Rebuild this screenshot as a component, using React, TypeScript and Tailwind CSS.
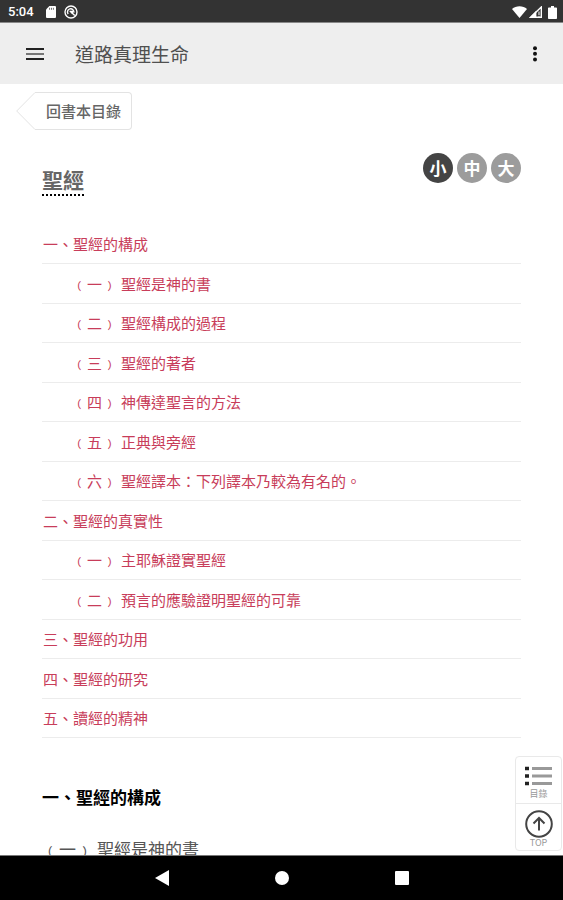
import React from "react";

type Entry = { label: string; mark?: string };

const entries: Entry[] = [
  { label: "一、聖經的構成" },
  { mark: "﹙一﹚", label: "聖經是神的書" },
  { mark: "﹙二﹚", label: "聖經構成的過程" },
  { mark: "﹙三﹚", label: "聖經的著者" },
  { mark: "﹙四﹚", label: "神傳達聖言的方法" },
  { mark: "﹙五﹚", label: "正典與旁經" },
  { mark: "﹙六﹚", label: "聖經譯本：下列譯本乃較為有名的。" },
  { label: "二、聖經的真實性" },
  { mark: "﹙一﹚", label: "主耶穌證實聖經" },
  { mark: "﹙二﹚", label: "預言的應驗證明聖經的可靠" },
  { label: "三、聖經的功用" },
  { label: "四、聖經的研究" },
  { label: "五、讀經的精神" },
];

function StatusBar() {
  return (
    <div className="flex h-[23px] shrink-0 items-center border-b border-[#888] bg-[#333] pt-0.5 pr-1.5 pl-2 text-white">
      <span className="font-[Roboto,sans-serif] text-[13px] leading-4 font-medium">5:04</span>
      <svg className="ml-3 h-3 w-2.5" viewBox="0 0 10 12" fill="currentColor" aria-hidden="true">
        <path d="M3.4 0H9a1 1 0 0 1 1 1v10a1 1 0 0 1-1 1H1a1 1 0 0 1-1-1V3.4z" />
        <path d="M3.6 1.8v2M5.5 1.8v2M7.4 1.8v2" stroke="#333" strokeWidth="0.7" />
      </svg>
      <svg className="ml-2 h-3.5 w-3.5" viewBox="0 0 14 14" fill="none" stroke="currentColor" strokeWidth="1.4" aria-hidden="true">
        <circle cx="7" cy="7" r="6" />
        <path d="M4.2 9A3.2 3.2 0 1 1 9.8 7.6M6.4 6.4l4.4 4.2" />
        <path d="M5.6 6.4h2.8v2.6" />
      </svg>
      <div className="ml-auto flex items-center gap-0.5">
        <svg className="h-3 w-[15px]" viewBox="0 0 15 12" fill="currentColor" aria-hidden="true">
          <path d="M0 3C4-.8 11-.8 15 3L7.5 12z" />
        </svg>
        <svg className="h-3 w-[13px]" viewBox="0 0 13 12" aria-hidden="true">
          <path d="M12.3 1v10.3H1.7z" fill="#333" stroke="#fff" strokeWidth="1.4" />
          <path d="M0 12L7.4 4.6V12z" fill="#fff" />
          <path d="M10 5.5v3.4M10 9.8v1.2" stroke="#ddd" strokeWidth="1.2" />
        </svg>
        <svg className="ml-1 h-[13px] w-[9px]" viewBox="0 0 9 13" fill="currentColor" aria-hidden="true">
          <path d="M3 0h3v1.4h2.2a.8.8 0 0 1 .8.8v10a.8.8 0 0 1-.8.8H.8a.8.8 0 0 1-.8-.8v-10a.8.8 0 0 1 .8-.8H3z" />
        </svg>
      </div>
    </div>
  );
}

function AppBar() {
  return (
    <header className="flex h-[61px] shrink-0 items-center bg-[#eee] pr-5 pl-[26px]">
      <button type="button" aria-label="選單">
        <svg className="h-3 w-[18px]" viewBox="0 0 18 12" aria-hidden="true">
          <path d="M0 1h18M0 11h18" stroke="#222" strokeWidth="2" />
          <path d="M0 6h18" stroke="#777" strokeWidth="2" />
        </svg>
      </button>
      <h1 className="ml-[31px] text-[19px] leading-6 text-[#505050]">道路真理生命</h1>
      <button type="button" aria-label="更多" className="ml-auto">
        <svg className="h-4 w-4" viewBox="0 0 16 16" fill="#111" aria-hidden="true">
          <circle cx="8" cy="2.2" r="2" />
          <circle cx="8" cy="7.8" r="2" />
          <circle cx="8" cy="13.4" r="2" />
        </svg>
      </button>
    </header>
  );
}

function SizeButton({ label, active = false }: { label: string; active?: boolean }) {
  return (
    <button
      type="button"
      aria-pressed={active}
      className={`flex size-[30px] items-center justify-center rounded-full text-[17px] leading-6 font-bold text-white ${
        active ? "bg-[#444]" : "bg-[#9c9c9c]"
      }`}
    >
      {label}
    </button>
  );
}

export default function App() {
  return (
    <div className="flex h-screen flex-col bg-white font-['Noto_Sans_CJK_TC',sans-serif]">
      <StatusBar />
      <AppBar />
      <main className="relative min-h-0 flex-1 overflow-hidden">
        <a href="#books" className="mt-2 ml-4 flex w-fit">
          <svg className="h-[38px] w-5" viewBox="0 0 20 38" fill="#fff" stroke="#e3e3e3" aria-hidden="true">
            <path d="M20 .5h-1L.7 19 19 37.5h1" />
          </svg>
          <span className="flex h-[38px] items-center rounded-r-sm border-y border-r border-[#e3e3e3] pr-2.5 pl-2.5 text-[15px] leading-6 font-medium text-[#666]">
            回書本目錄
          </span>
        </a>

        <div className="px-[42px]">
          <div className="mt-[23px] flex items-start justify-between">
            <h2 className="mt-3 border-b-2 border-dotted border-black pb-px text-[21px] leading-7 font-bold text-[#666]">
              聖經
            </h2>
            <div className="flex gap-1">
              <SizeButton label="小" active />
              <SizeButton label="中" />
              <SizeButton label="大" />
            </div>
          </div>

          <ul className="mt-[29px] text-[15px] leading-6 text-[#c83d5a]">
            {entries.map((entry, i) => (
              <li key={i} className="flex items-center border-b border-[#ececec] odd:h-[39px] even:h-10">
                {entry.mark ? (
                  <a href="#chapter" className="flex gap-1 pl-[30px]">
                    <span>{entry.mark}</span>
                    <span>{entry.label}</span>
                  </a>
                ) : (
                  <a href="#chapter" className="pl-px">{entry.label}</a>
                )}
              </li>
            ))}
          </ul>

          <h3 className="mt-[47px] text-[17px] leading-6 font-bold text-black">一、聖經的構成</h3>
          <p className="mt-7 flex gap-1 text-[17px] leading-6 text-[#555]">
            <span>﹙一﹚</span>
            <span>聖經是神的書</span>
          </p>
        </div>

        <div className="absolute right-px bottom-1 flex w-[47px] flex-col rounded border border-[#e9e9e9] bg-white text-[#999]">
          <button type="button" className="flex h-[47px] flex-col items-center justify-center border-b border-[#e9e9e9] pt-1.5">
            <svg className="h-5 w-7" viewBox="0 0 28 20" aria-hidden="true">
              <path d="M7 2.5h20M7 10h20M7 17.5h20" stroke="#999" strokeWidth="3" />
              <path d="M0 2.5h4M0 10h4M0 17.5h4" stroke="#222" strokeWidth="3.4" />
            </svg>
            <span className="mt-0.5 text-[9px] leading-3">目錄</span>
          </button>
          <button type="button" className="flex h-[46px] flex-col items-center justify-center pt-1">
            <svg className="h-7 w-7" viewBox="0 0 28 28" fill="none" stroke="#444" strokeWidth="2" aria-hidden="true">
              <circle cx="14" cy="14" r="12.8" />
              <path d="M14 20.5V8.5M8.5 13.5L14 8l5.5 5.5" />
            </svg>
            <span className="text-[9px] leading-[10px]">TOP</span>
          </button>
        </div>
      </main>

      <nav className="flex h-[45px] shrink-0 items-center justify-center gap-[106px] border-t border-[#777] bg-black">
        <button type="button" aria-label="返回">
          <svg className="h-4 w-3.5" viewBox="0 0 14 16" fill="#fff" aria-hidden="true">
            <path d="M14 0v16L0 8z" />
          </svg>
        </button>
        <button type="button" aria-label="主畫面" className="size-3.5 rounded-full bg-white" />
        <button type="button" aria-label="最近使用" className="size-3.5 rounded-[1px] bg-white" />
      </nav>
    </div>
  );
}
